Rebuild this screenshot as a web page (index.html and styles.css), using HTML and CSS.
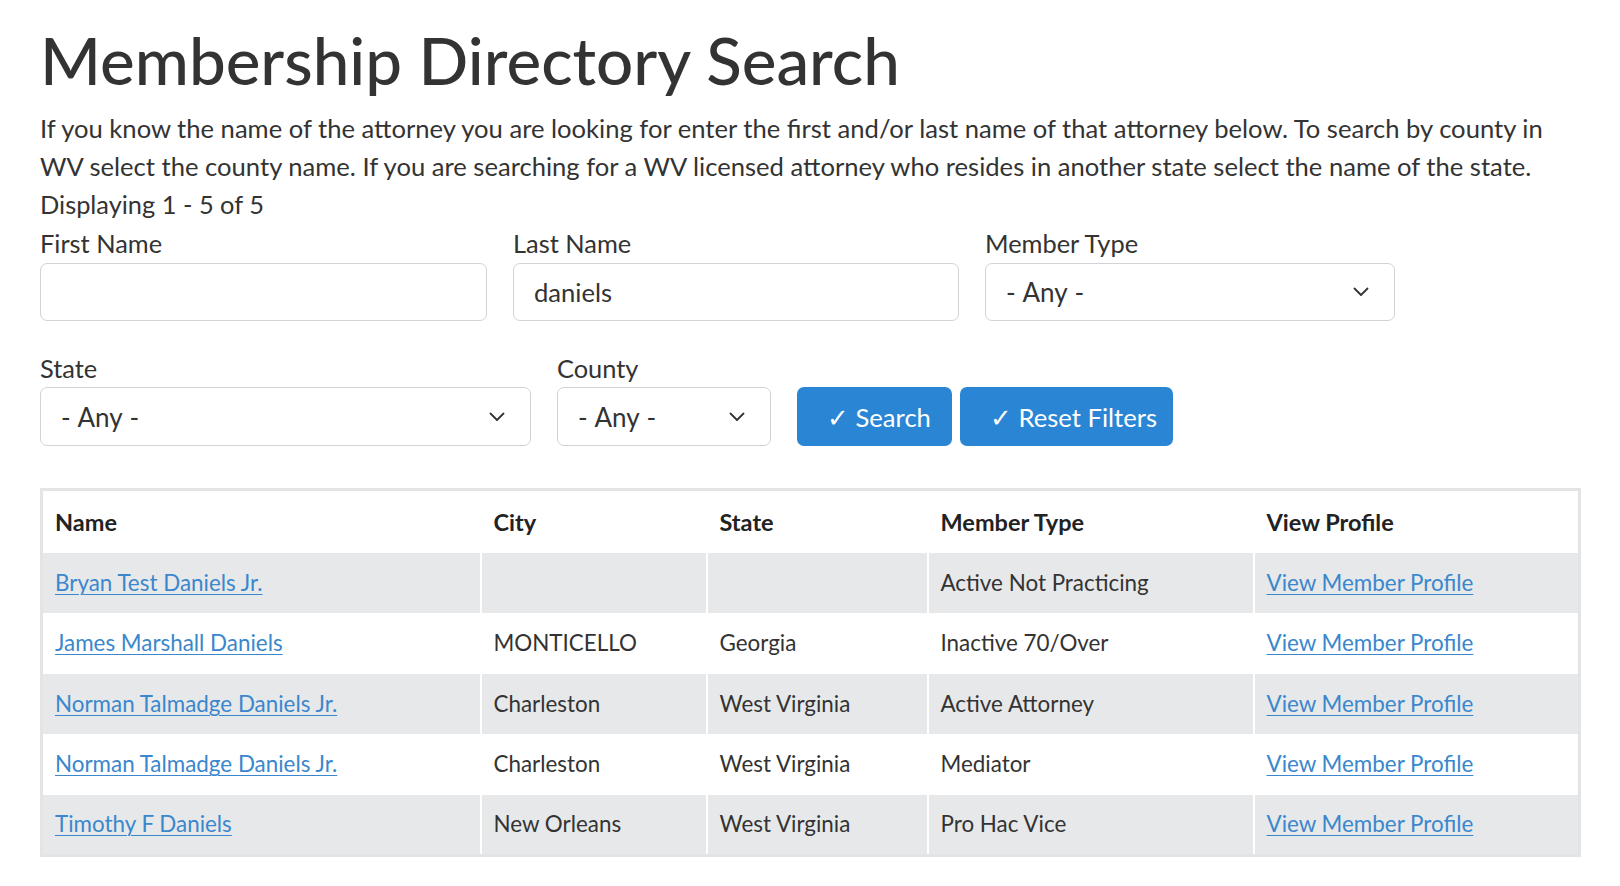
FILE: index.html
```html
<!DOCTYPE html>
<html lang="en">
<head>
<meta charset="utf-8">
<title>Membership Directory Search</title>
<link rel="stylesheet" href="styles.css">
</head>
<body>
<main class="page">
  <h1 class="title">Membership Directory Search</h1>
  <p class="intro">If you know the name of the attorney you are looking for enter the first and/or last name of that attorney below. To search by county in WV select the county name. If you are searching for a WV licensed attorney who resides in another state select the name of the state.</p>
  <div class="count">Displaying 1 - 5 of 5</div>

  <form class="filters">
    <div class="row row-1">
      <div class="field f-first">
        <label class="label" for="first">First Name</label>
        <input class="control" id="first" type="text" value="">
      </div>
      <div class="field f-last">
        <label class="label" for="last">Last Name</label>
        <input class="control" id="last" type="text" value="daniels">
      </div>
      <div class="field f-type">
        <label class="label" for="type">Member Type</label>
        <div class="select-wrap">
          <select class="control select" id="type"><option>- Any -</option></select>
          <svg class="chev" viewBox="0 0 16 10" width="16" height="10"><path d="M1.5 1.5 L8 8 L14.5 1.5" fill="none" stroke="#333" stroke-width="1.8" stroke-linecap="round" stroke-linejoin="round"/></svg>
        </div>
      </div>
    </div>
    <div class="row row-2">
      <div class="field f-state">
        <label class="label" for="state">State</label>
        <div class="select-wrap">
          <select class="control select tall" id="state"><option>- Any -</option></select>
          <svg class="chev" viewBox="0 0 16 10" width="16" height="10"><path d="M1.5 1.5 L8 8 L14.5 1.5" fill="none" stroke="#333" stroke-width="1.8" stroke-linecap="round" stroke-linejoin="round"/></svg>
        </div>
      </div>
      <div class="field f-county">
        <label class="label" for="county">County</label>
        <div class="select-wrap">
          <select class="control select tall" id="county"><option>- Any -</option></select>
          <svg class="chev" viewBox="0 0 16 10" width="16" height="10"><path d="M1.5 1.5 L8 8 L14.5 1.5" fill="none" stroke="#333" stroke-width="1.8" stroke-linecap="round" stroke-linejoin="round"/></svg>
        </div>
      </div>
      <div class="buttons">
        <button type="button" class="btn btn-search">&#10003; Search</button>
        <button type="button" class="btn btn-reset">&#10003; Reset Filters</button>
      </div>
    </div>
  </form>

  <table class="results">
    <colgroup>
      <col class="c-name"><col class="c-city"><col class="c-state"><col class="c-type"><col class="c-view">
    </colgroup>
    <thead>
      <tr><th>Name</th><th>City</th><th>State</th><th>Member Type</th><th>View Profile</th></tr>
    </thead>
    <tbody>
      <tr><td><a href="#">Bryan Test Daniels Jr.</a></td><td></td><td></td><td>Active Not Practicing</td><td><a href="#">View Member Profile</a></td></tr>
      <tr><td><a href="#">James Marshall Daniels</a></td><td>MONTICELLO</td><td>Georgia</td><td>Inactive 70/Over</td><td><a href="#">View Member Profile</a></td></tr>
      <tr><td><a href="#">Norman Talmadge Daniels Jr.</a></td><td>Charleston</td><td>West Virginia</td><td>Active Attorney</td><td><a href="#">View Member Profile</a></td></tr>
      <tr><td><a href="#">Norman Talmadge Daniels Jr.</a></td><td>Charleston</td><td>West Virginia</td><td>Mediator</td><td><a href="#">View Member Profile</a></td></tr>
      <tr><td><a href="#">Timothy F Daniels</a></td><td>New Orleans</td><td>West Virginia</td><td>Pro Hac Vice</td><td><a href="#">View Member Profile</a></td></tr>
    </tbody>
  </table>
</main>
</body>
</html>
```
FILE: styles.css
```css
* { box-sizing: border-box; }
html, body { margin: 0; padding: 0; background: #fff; }
body {
  font-family: "Lato", "Open Sans", sans-serif;
  font-size: 25.4px;
  line-height: 38px;
  color: #333;
}
.page {
  width: 1581px;
  padding: 21px 0 0 40px;
}
.title {
  margin: 0 0 11px 0;
  font-size: 65.5px;
  line-height: 77px;
  font-weight: 500;
  color: #333;
}
.intro { margin: 0; max-width: 1530px; font-size: 25.6px; }
.count { margin: 0; }

.filters { margin: 0; }
.row { display: flex; align-items: flex-end; }
.row-1 { gap: 26px; }
.row-2 { gap: 26px; margin-top: 28px; }
.field { display: flex; flex-direction: column; }
.label { display: block; line-height: 38px; color: #333; }
.row-1 .label { line-height: 40px; }
.f-first { width: 447px; }
.f-last { width: 446px; }
.f-type { width: 410px; }
.f-state { width: 491px; }
.f-county { width: 214px; }

.control {
  display: block;
  width: 100%;
  height: 58px;
  margin: 0;
  padding: 0 20px;
  border: 1px solid #d0d3d7;
  border-radius: 7px;
  background: #fff;
  font: inherit;
  color: #333;
  font-size: 25.6px;
  outline: none;
}
.select { font-size: 26px; word-spacing: 1px; }
.control.tall { height: 59px; }
.select-wrap { position: relative; }
.select { appearance: none; -webkit-appearance: none; padding-right: 50px; }
.chev { position: absolute; right: 26px; top: 50%; margin-top: -5px; pointer-events: none; }

.buttons { display: flex; gap: 8px; }
.btn {
  height: 59px;
  border: none;
  border-radius: 7px;
  background: #2a85d4;
  color: #fff;
  font: inherit;
  font-size: 25.6px;
  text-align: left;
  padding: 0 0 0 30px;
  cursor: pointer;
}
.btn-search { width: 155px; }
.btn-reset { width: 213px; }

.results {
  margin-top: 42px;
  width: 1541px;
  border-collapse: collapse;
  border: 3px solid #e3e4e6;
  table-layout: fixed;
  font-size: 22.4px;
}
.c-name { width: 439px; }
.c-city { width: 226px; }
.c-state { width: 221px; }
.c-type { width: 326px; }
.c-view { width: 326px; }
.results th, .results td {
  text-align: left;
  padding: 0 12px;
  border-left: 2px solid #fff;
  vertical-align: middle;
}
.results th {
  height: 63px;
  font-size: 23.5px;
  font-weight: 700;
  color: #222;
}
.results td { height: 60.5px; color: #333; }
.results tbody tr:nth-child(odd) td { background: #e7e8ea; }
.results a { color: #3a87cd; text-decoration: underline; text-underline-offset: 3px; text-decoration-thickness: 1px; }
```
